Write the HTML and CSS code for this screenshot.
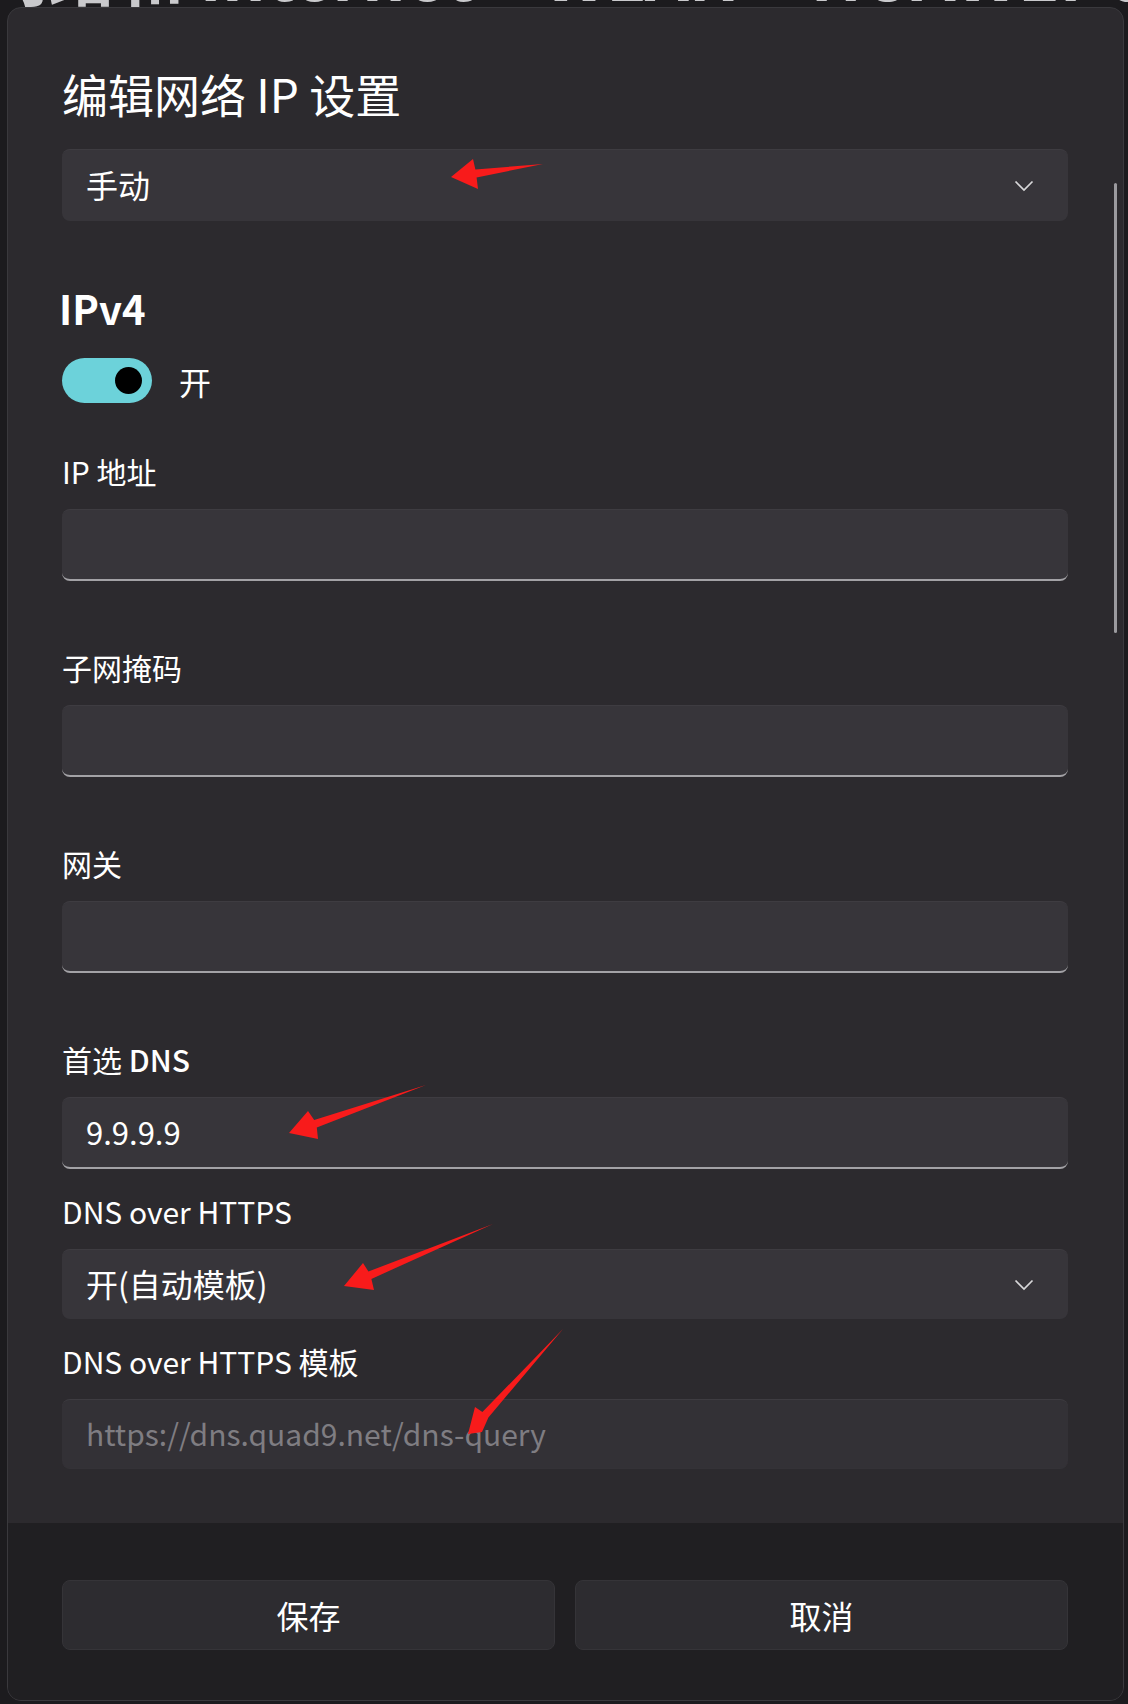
FILE: index.html
```html
<!DOCTYPE html>
<html lang="zh-CN">

<head>
    <meta charset="UTF-8">
    <title>编辑网络 IP 设置</title>
    <link rel="stylesheet" href="styles.css">
</head>

<body>
    <div class="backdrop-title">网络和 Internet &gt; WLAN &gt; HUAWEI-0914A8 &gt;</div>

    <div class="dialog">
        <div class="dialog-body">
            <h1 class="dialog-title">编辑网络 IP 设置</h1>
            <div class="select">
                <span>手动</span>
                <svg class="chevron" width="20" height="12" viewBox="0 0 20 12"><path d="M1.5 1.5 L10 10 L18.5 1.5" /></svg>
            </div>

            <h2 class="section-title">IPv4</h2>
            <div class="toggle-row">
                <div class="toggle"><span class="knob"></span></div>
                <span>开</span>
            </div>

            <div class="field first">
                <label>IP 地址</label>
                <div class="input"></div>
            </div>
            <div class="field">
                <label>子网掩码</label>
                <div class="input"></div>
            </div>
            <div class="field">
                <label>网关</label>
                <div class="input"></div>
            </div>
            <div class="field">
                <label>首选 <b>DNS</b></label>
                <div class="input">9.9.9.9</div>
            </div>
            <div class="field compact">
                <label>DNS over HTTPS</label>
                <div class="select short">
                    <span>开(自动模板)</span>
                    <svg class="chevron" width="20" height="12" viewBox="0 0 20 12"><path d="M1.5 1.5 L10 10 L18.5 1.5" /></svg>
                </div>
            </div>
            <div class="field compact">
                <label>DNS over HTTPS 模板</label>
                <div class="input short disabled">https://dns.quad9.net/dns-query</div>
            </div>
        </div>

        <div class="dialog-footer">
            <button class="btn">保存</button>
            <button class="btn">取消</button>
        </div>

        <div class="scrollbar"></div>
    </div>

    <!-- red arrows drawn on top of the screenshot -->
    <svg class="annotations" width="1128" height="1704" viewBox="0 0 1128 1704">
        <polygon points="451,177 473,159 475.4,169.5 543,164 476.6,177.5 478,189" />
        <polygon points="289,1133 308,1111 314.2,1119.9 426,1085 316.8,1127.5 318,1139" />
        <polygon points="344,1286 363,1263 368.4,1271.5 493,1224 371.4,1278.9 374,1290" />
        <polygon points="468,1434 475,1407 482.4,1412 563,1329 488.4,1417.4 482,1432" />
    </svg>
</body>

</html>
```

FILE: styles.css
```css
* {
    box-sizing: border-box;
}

body {
    margin: 0;
    width: 1128px;
    height: 1704px;
    padding: 7px 4px 3px 7px;
    background: #1c1b1e;
    font-family: "Noto Sans CJK SC", "Noto Sans", sans-serif;
    color: #fff;
    position: relative;
    overflow: hidden;
}

.backdrop-title {
    position: absolute;
    top: -62px;
    left: -20px;
    white-space: nowrap;
    font-size: 68px;
    line-height: 68px;
    font-weight: 600;
    color: #c9c9cc;
}

.dialog {
    position: relative;
    height: 1694px;
    background: #2c2a2e;
    border: 1px solid #3a393d;
    border-radius: 14px;
    display: flex;
    flex-direction: column;
    overflow: hidden;
}

.dialog-body {
    flex: 1;
    padding: 55px 55px 0 54px;
}

.dialog-title {
    margin: 0 0 26px;
    font-size: 46px;
    line-height: 60px;
    font-weight: 400;
}

.select {
    height: 72px;
    background: #37353a;
    border-top: 1px solid #3e3c41;
    border-radius: 8px;
    display: flex;
    align-items: center;
    justify-content: space-between;
    padding: 0 34px 4px 24px;
    font-size: 32px;
}

.select.short,
.input.short {
    height: 70px;
}

.chevron {
    margin-top: 4px;
}

.chevron path {
    fill: none;
    stroke: #d8d8da;
    stroke-width: 1.7;
}

.section-title {
    margin: 59px 0 22px -3px;
    font-size: 40px;
    line-height: 56px;
    font-weight: 700;
}

.toggle-row {
    height: 45px;
    display: flex;
    align-items: center;
    gap: 27px;
    font-size: 32px;
}

.toggle {
    width: 90px;
    height: 45px;
    border-radius: 23px;
    background: #6cd2da;
    display: flex;
    align-items: center;
    justify-content: flex-end;
    padding-right: 10px;
}

.knob {
    width: 27px;
    height: 27px;
    border-radius: 50%;
    background: #000;
}

.field {
    margin-top: 64px;
}

.field.first {
    margin-top: 46px;
}

.field.compact {
    margin-top: 20px;
}

.field label {
    display: block;
    font-size: 30px;
    line-height: 44px;
    margin-bottom: 16px;
}

.field label b {
    font-weight: 500;
}

.input {
    height: 72px;
    background: #37353a;
    border-top: 1px solid #3e3c41;
    border-bottom: 2px solid #a3a2a6;
    border-radius: 8px;
    display: flex;
    align-items: center;
    padding: 0 0 2px 24px;
    font-size: 31px;
}

.input.disabled {
    border-bottom: 1px solid #343237;
    background: #333136;
    color: #7f7d82;
    font-size: 30px;
}

.dialog-footer {
    height: 177px;
    background: #201f22;
    display: flex;
    gap: 20px;
    padding: 57px 55px 0 54px;
}

.btn {
    flex: 1;
    height: 70px;
    background: #2d2c30;
    border: 1px solid #353438;
    border-radius: 8px;
    color: #fff;
    font-family: inherit;
    font-size: 32px;
}

.scrollbar {
    position: absolute;
    top: 175px;
    right: 6px;
    width: 3px;
    height: 450px;
    border-radius: 2px;
    background: #9b9a9e;
}

.annotations {
    position: absolute;
    top: 0;
    left: 0;
    pointer-events: none;
}

.annotations polygon {
    fill: #f81b1b;
}
```
